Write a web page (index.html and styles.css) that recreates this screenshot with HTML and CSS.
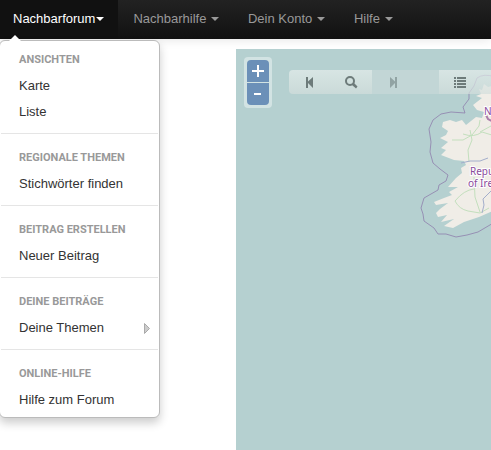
FILE: index.html
```html
<!DOCTYPE html>
<html lang="de">
<head>
<meta charset="utf-8">
<title>Nachbarforum</title>
<link rel="stylesheet" href="styles.css">
</head>
<body>
<nav class="navbar">
  <ul class="nav">
    <li class="nav-item active">
      <a class="nav-link" href="#">Nachbarforum<b class="caret"></b></a>
      <div class="dropdown">
        <h6 class="menu-header">Ansichten</h6>
        <a class="menu-item" href="#">Karte</a>
        <a class="menu-item" href="#">Liste</a>
        <hr class="divider">
        <h6 class="menu-header">Regionale Themen</h6>
        <a class="menu-item" href="#">Stichwörter finden</a>
        <hr class="divider">
        <h6 class="menu-header">Beitrag erstellen</h6>
        <a class="menu-item" href="#">Neuer Beitrag</a>
        <hr class="divider">
        <h6 class="menu-header">Deine Beiträge</h6>
        <a class="menu-item submenu" href="#">Deine Themen
          <svg width="6" height="11" viewBox="0 0 6 11" aria-hidden="true"><path d="M.5.5 5.5 5.5.5 10.5z" fill="#ccc" stroke="#aaa"/></svg>
        </a>
        <hr class="divider">
        <h6 class="menu-header">Online-Hilfe</h6>
        <a class="menu-item" href="#">Hilfe zum Forum</a>
      </div>
    </li>
    <li class="nav-item"><a class="nav-link" href="#">Nachbarhilfe <b class="caret"></b></a></li>
    <li class="nav-item"><a class="nav-link" href="#">Dein Konto <b class="caret"></b></a></li>
    <li class="nav-item"><a class="nav-link" href="#">Hilfe <b class="caret"></b></a></li>
  </ul>
</nav>
<main class="page">
  <div class="map">
    <svg class="map-canvas" viewBox="236 49 255 401" preserveAspectRatio="xMinYMin slice" aria-hidden="true">
      <path class="land" d="M495 85L488 87 484 84 482 90 479 89 481 94 476 96 482 98 473 105 477 110 484 112 482 118 476 117 471 121 466 125 462 120 456 122 450 120 443 122 442 127 448 131 446 135 440 138 448 142 441 148 446 150 441 155 454 160 464 161 466 165 461 168 462 173 456 178 448 187 458 187 449 192 452 195 444 198 434 202 436 205 448 203 440 209 436 213 438 217 447 215 441 222 454 219 444 226 453 228 464 222 479 217 495 210z"/>
      <path class="road" d="M455 201Q464 190 474 189M455 201Q459 209 468 211L480 213 489 208M474 177L475 197 480 212M463 134Q474 138 482 132L495 136M470 130L472 140 468 150 469 162M480 120L479 126 472 135M452 140L463 140 472 135M480 132L491 126"/>
      <path class="river" d="M461 163L470 161 480 161 488 158M482 213L484 205 483 199 491 191"/>
      <path class="border" d="M495 77Q484 73 477 78L474 86 469 93 469 99 463 107 465 113 451 112 441 114 433 120 429 129 431 142 430 152 433 163 440 169 448 175 446 181 439 185 438 190 424 198 421 208 423 214 424 221 434 228 438 234 446 234 456 237 467 235 478 232 495 222"/>
      <path class="ulster" d="M486 115L488 119 495 123"/>
      <g class="place"><text x="470" y="175">Repu</text><text x="468" y="187">of Ire</text><text x="484" y="115">N</text></g>
    </svg>
    <div class="zoom-control">
      <button class="zoom-button" type="button" aria-label="Vergrößern"><svg width="12" height="12" viewBox="0 0 12 12"><path d="M6 0V12M0 6H12"/></svg></button>
      <button class="zoom-button" type="button" aria-label="Verkleinern"><svg width="12" height="12" viewBox="0 0 12 12"><path d="M2 6H9"/></svg></button>
    </div>
    <div class="toolbar">
      <button class="tool" type="button" aria-label="Zurück"><svg width="10" height="12" viewBox="0 0 10 12"><path d="M1 1H3V5.500L8 1V12L3 7V12H1z"/></svg></button>
      <button class="tool" type="button" aria-label="Suchen"><svg width="14" height="14" viewBox="0 0 14 14"><circle cx="6" cy="6" r="4" fill="none" stroke="#6d7b7a" stroke-width="2"/><path d="M8 10L10 8 13.500 11.500 12 13.500z"/></svg></button>
      <button class="tool" type="button" aria-label="Vor" disabled><svg width="10" height="12" viewBox="0 0 10 12"><path d="M9 1H7V5.500L2 1V12L7 7V12H9z"/></svg></button>
      <span class="tool-gap"></span>
      <button class="tool" type="button" aria-label="Liste"><svg width="12" height="12" viewBox="0 0 12 12"><path d="M0 1H2V3H0zM3 1H12V3H3zM0 4H2V6H0zM3 4H12V6H3zM0 7H2V9H0zM3 7H12V9H3zM0 10H2V12H0zM3 10H12V12H3z"/></svg></button>
      <span class="tool-end"></span>
    </div>
  </div>
</main>
</body>
</html>
```
FILE: styles.css
```css
* { box-sizing: border-box; }
body {
  margin: 0;
  min-height: 100vh;
  display: flex;
  flex-direction: column;
  overflow: hidden;
  background: #fff;
  font: 13px/20px "Liberation Sans", Arial, sans-serif;
  color: #333;
}
a { color: inherit; text-decoration: none; }
.navbar {
  position: relative;
  z-index: 2;
  background: linear-gradient(#222, #111);
  box-shadow: 0 1px 10px rgba(0, 0, 0, .1);
}
.nav {
  display: flex;
  margin: 0 0 0 -2px;
  padding: 0;
  list-style: none;
}
.nav-item { position: relative; white-space: nowrap; }
.nav-link { display: block; padding: 9px 14px 10px 15px; color: #999; }
.active > .nav-link { background: #111; color: #fff; }
.caret {
  display: inline-block;
  margin: 8px 0 0 1px;
  vertical-align: top;
  border: 4px solid transparent;
  border-top-color: currentColor;
  border-bottom: 0;
}
.dropdown {
  position: absolute;
  top: 40px;
  left: 1px;
  width: 161px;
  padding: 5px 0;
  background: #fff;
  border: 1px solid #bbb;
  border-radius: 6px;
  box-shadow: 0 5px 10px rgba(0, 0, 0, .2);
}
.dropdown::before {
  content: "";
  position: absolute;
  top: -6px;
  left: 9px;
  border: 6px solid transparent;
  border-top: 0;
  border-bottom-color: #fff;
}
.menu-header, .menu-item {
  margin: 0;
  padding: 4px 19px 2px;
}
.menu-header {
  font: bold 11px/20px Roboto, "Liberation Sans", sans-serif;
  color: #999;
  text-transform: uppercase;
}
.menu-item { display: block; }
.submenu {
  display: flex;
  justify-content: space-between;
  align-items: center;
  padding-right: 9px;
}
.divider {
  height: 1px;
  margin: 9px 1px 10px;
  border: 0;
  background: #e5e5e5;
}
.page {
  flex: 1;
  display: flex;
  padding: 10px 0 0 236px;
}
.map {
  position: relative;
  flex: 1;
  overflow: hidden;
  background: #b5d0d0;
}
.map-canvas { position: absolute; inset: 0; width: 100%; height: 100%; }
.land { fill: #f0ede7; }
.road { fill: none; stroke: #c3dfbd; stroke-width: 1; }
.river { fill: none; stroke: #a3aecb; stroke-width: 1; }
.border { fill: none; stroke: #8f80ad; stroke-width: 1; opacity: .8; }
.ulster { fill: none; stroke: #8d4d92; stroke-width: 2; opacity: .7; }
.place {
  font: 10px "Noto Sans", sans-serif;
  fill: #8a4a9b;
  stroke: #fff;
  stroke-width: 2px;
  paint-order: stroke;
}
.zoom-control {
  position: absolute;
  top: 8px;
  left: 8px;
  display: grid;
  gap: 1px;
  padding: 3px;
  border-radius: 4px;
  background: rgba(255, 255, 255, .4);
}
.zoom-button {
  display: grid;
  place-items: center;
  width: 22px;
  height: 22px;
  padding: 0;
  border: 0;
  border-radius: 4px 4px 0 0;
  background: #6b90b8;
}
.zoom-button:last-child { border-radius: 0 0 4px 4px; }
.zoom-button path { stroke: #fff; stroke-width: 2; }
.toolbar {
  position: absolute;
  top: 21px;
  left: 53px;
  right: 0;
  display: flex;
  height: 24px;
  border-radius: 4px 0 0 4px;
  overflow: hidden;
}
.tool, .tool-end {
  border: 0;
  background: linear-gradient(rgba(230, 238, 236, .7), rgba(211, 222, 220, .7));
}
.tool {
  display: grid;
  place-items: center;
  width: 42px;
  padding: 0;
}
.tool:first-child { width: 41px; }
.tool path { fill: #6d7b7a; }
.tool:disabled, .tool-gap { background: rgba(200, 217, 216, .7); }
.tool:disabled path { fill: #91a3a3; }
.tool-gap { width: 25px; }
.tool-end { flex: 1; }
```
